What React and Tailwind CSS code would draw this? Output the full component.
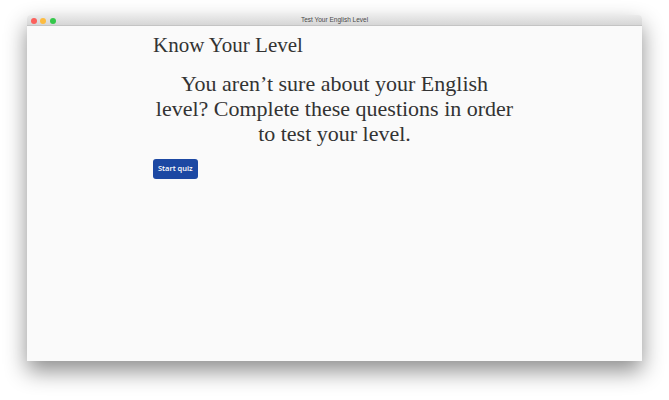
export default function App() {
  return (
    <div className="w-[669px] h-[400px] bg-white pt-[15px] pl-[27px] overflow-hidden">
      <div className="w-[615px] h-[346px] flex flex-col bg-[#fafafa] shadow-[0_10px_22px_rgba(0,0,0,0.45)] rounded-t-[4px] overflow-hidden">
        {/* title bar */}
        <div className="relative h-[11px] flex-shrink-0 bg-gradient-to-b from-[#ebebeb] to-[#d6d6d6] border-b border-[#c4c4c4] flex items-center justify-center">
          <div className="absolute left-[3.5px] top-[2.5px] flex gap-[3.7px]">
            <span className="w-[6px] h-[6px] rounded-full bg-[#fc605c]" />
            <span className="w-[6px] h-[6px] rounded-full bg-[#fdbc40]" />
            <span className="w-[6px] h-[6px] rounded-full bg-[#34c84a]" />
          </div>
          <span className="text-[6.5px] leading-none text-[#4a4a4a] font-['Liberation_Sans',sans-serif]">
            Test Your English Level
          </span>
        </div>

        {/* page */}
        <div className="flex-1 flex justify-center">
          <div className="w-[363px] pt-[7px] font-['Liberation_Serif',Georgia,serif] text-[#333]">
            <h1 className="text-[21px] leading-[24px]">Know Your Level</h1>
            <p className="mt-[14px] text-[22px] leading-[25px] text-center">
              You aren’t sure about your English level? Complete these questions in order to test your level.
            </p>
            <button className="mt-[13px] h-[20px] px-[5px] rounded-[3px] bg-[#1c48a3] text-white text-[7.5px] font-semibold font-['Open_Sans',sans-serif]">
              Start quiz
            </button>
          </div>
        </div>
      </div>
    </div>
  );
}
